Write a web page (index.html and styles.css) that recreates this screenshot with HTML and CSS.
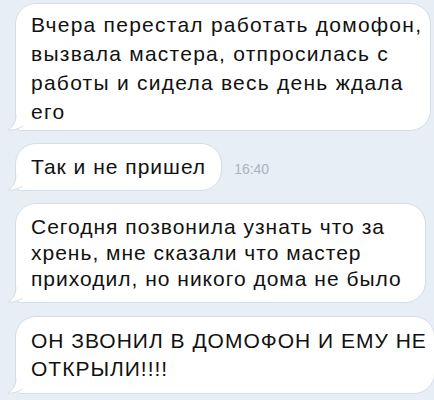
FILE: index.html
```html
<!DOCTYPE html>
<html lang="ru">
<head>
  <meta charset="UTF-8">
  <title>Переписка</title>
  <link rel="stylesheet" href="styles.css">
</head>
<body>

  <!-- chat -->
  <div class="chat">

    <div class="bubble first">
      Вчера перестал работать домофон,<br>
      вызвала мастера, отпросилась с<br>
      работы и сидела весь день ждала<br>
      его
      <svg class="tail" width="16" height="16" viewBox="0 0 16 16"><path d="M8 0 C8 7 5 12 0 15 C5 15.5 10 14 15 11 L15 0 Z" fill="#fff"/><path d="M8 0 C8 7 5 12 0 15 C5 15.5 10 14 15 11" fill="none" stroke="#d6dde6" stroke-width="1"/></svg>
    </div>

    <div class="row">
      <div class="bubble short">
        Так и не пришел
        <svg class="tail" width="16" height="16" viewBox="0 0 16 16"><path d="M8 0 C8 7 5 12 0 15 C5 15.5 10 14 15 11 L15 0 Z" fill="#fff"/><path d="M8 0 C8 7 5 12 0 15 C5 15.5 10 14 15 11" fill="none" stroke="#d6dde6" stroke-width="1"/></svg>
      </div>
      <span class="time">16:40</span>
    </div>

    <div class="bubble third">
      Сегодня позвонила узнать что за<br>
      хрень, мне сказали что мастер<br>
      приходил, но никого дома не было
      <svg class="tail" width="16" height="16" viewBox="0 0 16 16"><path d="M8 0 C8 7 5 12 0 15 C5 15.5 10 14 15 11 L15 0 Z" fill="#fff"/><path d="M8 0 C8 7 5 12 0 15 C5 15.5 10 14 15 11" fill="none" stroke="#d6dde6" stroke-width="1"/></svg>
    </div>

    <div class="bubble last">
      ОН ЗВОНИЛ В ДОМОФОН И ЕМУ НЕ<br>
      ОТКРЫЛИ!!!!
      <svg class="tail" width="16" height="16" viewBox="0 0 16 16"><path d="M8 0 C8 7 5 12 0 15 C5 15.5 10 14 15 11 L15 0 Z" fill="#fff"/><path d="M8 0 C8 7 5 12 0 15 C5 15.5 10 14 15 11" fill="none" stroke="#d6dde6" stroke-width="1"/></svg>
    </div>

  </div>

</body>
</html>
```

FILE: styles.css
```css
body {
  margin: 0;
  background: #e8eef5;
  font-family: 'Liberation Sans', Arial, sans-serif;
  color: #111;
  overflow: hidden;
}
.chat {
  display: flex;
  flex-direction: column;
  align-items: flex-start;
  gap: 12px;
  padding: 3px 0 0 15px;
}
.bubble {
  position: relative;
  box-sizing: border-box;
  background: #fff;
  border: 1px solid #d6dde6;
  border-radius: 21px;
  border-bottom-left-radius: 6px;
  font-size: 21px;
  line-height: 26px;
  letter-spacing: 1px;
  padding: 10px 15px;
  white-space: nowrap;
}
.first {
  width: 416px;
  line-height: 29px;
  letter-spacing: 1.25px;
  padding: 6px 15px 4px;
}
.short {
  padding: 10px 15px 10px 15px;
}
.third {
  width: 411px;
}
.last {
  width: 420px;
  line-height: 28px;
  padding: 10px 15px 10px;
  margin-top: 1px;
}
.tail {
  position: absolute;
  left: -8px;
  bottom: -1px;
}
.row {
  display: flex;
  align-items: center;
  gap: 12px;
}
.time {
  color: #a9b4c2;
  font-size: 14px;
  padding-top: 4px;
}
```
